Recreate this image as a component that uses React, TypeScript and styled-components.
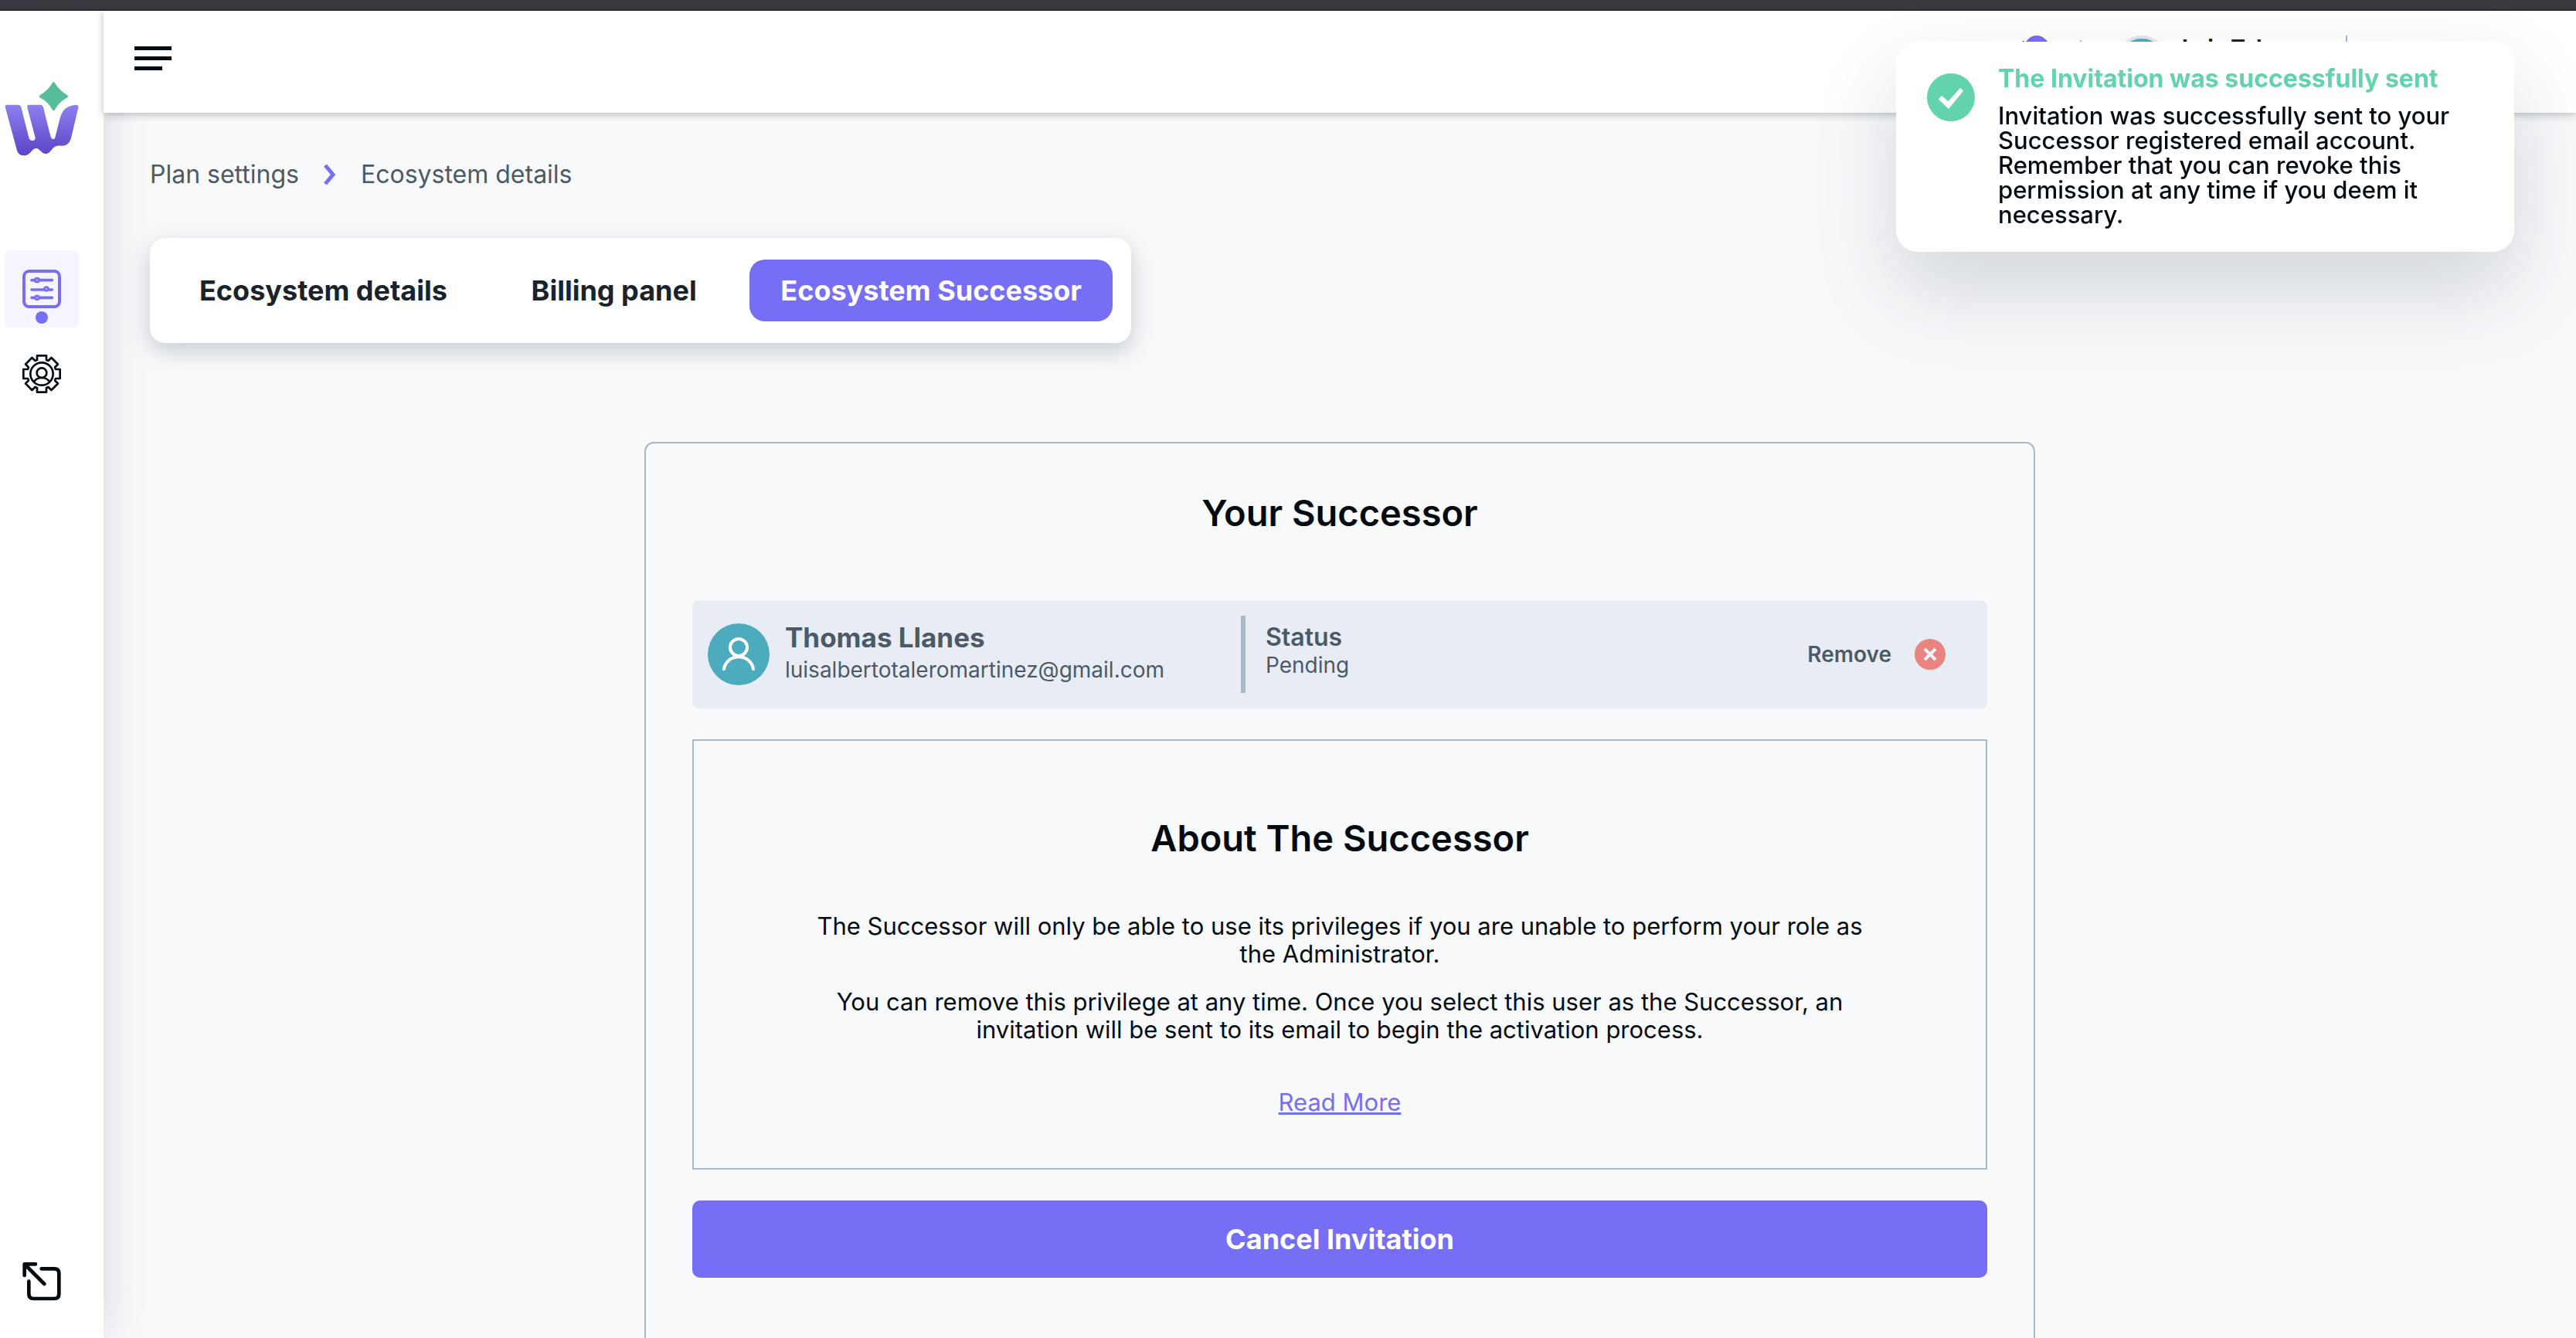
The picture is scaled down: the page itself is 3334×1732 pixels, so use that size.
import React from "react";
import styled, { createGlobalStyle } from "styled-components";

const color = {
  primary: "#766ef4",
  ink: "#030b11",
  dark: "#18232b",
  slate: "#4c5a67",
  line: "#a9b9c8",
  page: "#f8f9fb",
  teal: "#4cacbe",
  mint: "#62d3ac",
  coral: "#e98480",
};

const GlobalStyle = createGlobalStyle`
  *, *::before, *::after { box-sizing: border-box; }
  body { margin: 0; background: ${color.page}; color: ${color.ink}; }
  body, button { font-family: Inter, "Liberation Sans", sans-serif; }
  h1, h2, p { margin: 0; }
  button { border: 0; padding: 0; background: none; color: inherit; cursor: pointer; }
  svg { display: block; }
`;

const Shell = styled.div`
  display: flex;
  flex-direction: column;
  height: 100vh;
  overflow: hidden;
`;

const WindowEdge = styled.div`
  flex: none;
  height: 14px;
  background: #3b3a40;
  border-bottom: 2px solid #2d2c31;
`;

const Body = styled.div`
  flex: 1;
  display: flex;
  min-height: 0;
`;

const Sidebar = styled.aside`
  flex: none;
  width: 134px;
  display: flex;
  flex-direction: column;
  padding: 92px 32px 48px 6px;
  background: #fff;
  box-shadow: 0 0 60px rgba(24, 40, 56, 0.16);
`;

const LogoLink = styled.a`
  width: 96px;
  height: 96px;
`;

const SideNav = styled.nav`
  display: flex;
  flex-direction: column;
  gap: 10px;
  margin-top: 122px;
`;

const SideLink = styled.a<{ $active?: boolean }>`
  display: flex;
  flex-direction: column;
  align-items: center;
  gap: 4px;
  height: 100px;
  padding-top: 25px;
  border-radius: 8px;
  background: ${(p) => (p.$active ? "#f6f5ff" : "transparent")};
`;

const ActiveDot = styled.span`
  width: 16px;
  height: 16px;
  border-radius: 50%;
  background: ${color.primary};
`;

const ExitButton = styled.button`
  align-self: center;
  margin-top: auto;
`;

const Column = styled.div`
  flex: 1;
  min-width: 0;
  display: flex;
  flex-direction: column;
`;

const Header = styled.header`
  position: relative;
  flex: none;
  display: flex;
  align-items: center;
  justify-content: space-between;
  height: 132px;
  padding: 0 296px 0 40px;
  background: #fff;
  box-shadow: 0 2px 10px rgba(20, 32, 44, 0.3);
`;

const MenuButton = styled.button`
  display: flex;
  flex-direction: column;
  gap: 8px;
  margin-bottom: 10px;
`;

const MenuBar = styled.span<{ $short?: boolean }>`
  width: ${(p) => (p.$short ? 36 : 48)}px;
  height: 5px;
  background: ${color.ink};
`;

const HeaderTools = styled.div`
  display: flex;
  align-items: center;
`;

const Bell = styled.button`
  position: relative;
  width: 40px;
  height: 56px;
  margin-right: 40px;
`;

const Badge = styled.span`
  position: absolute;
  top: -6px;
  right: 0;
  width: 32px;
  height: 32px;
  border-radius: 50%;
  background: ${color.primary};
`;

const Rule = styled.span<{ $height: number }>`
  width: 2px;
  height: ${(p) => p.$height}px;
  background: ${color.line};
`;

const HeaderAvatar = styled.span`
  width: 68px;
  height: 68px;
  margin: 0 18px 0 44px;
  border: 4px solid #e3e8ee;
  border-radius: 50%;
  background: ${color.teal};
`;

const AccountName = styled.span`
  width: 212px;
  height: 68px;
  font-size: 28px;
  font-weight: 700;
  line-height: 32px;
  color: ${color.dark};
`;

const Main = styled.main`
  flex: 1;
  min-height: 0;
  display: flex;
  flex-direction: column;
  align-items: flex-start;
  padding: 60px 60px 0;
`;

const Breadcrumb = styled.nav`
  display: flex;
  align-items: center;
  gap: 32px;
  height: 40px;
  font-size: 32px;
  line-height: 40px;
`;

const Crumb = styled.a`
  color: ${color.slate};
  text-decoration: none;
`;

const Tabs = styled.div`
  display: flex;
  justify-content: space-between;
  width: 1270px;
  margin-top: 62px;
  padding: 28px 24px;
  border-radius: 20px;
  background: #fff;
  box-shadow: 0 10px 30px rgba(20, 40, 56, 0.22);
`;

const Tab = styled.button<{ $active?: boolean }>`
  height: 80px;
  padding: 0 40px;
  border-radius: 20px;
  font-size: 36px;
  font-weight: 700;
  line-height: 44px;
  color: ${(p) => (p.$active ? "#fff" : color.dark)};
  background: ${(p) => (p.$active ? color.primary : "transparent")};
`;

const Card = styled.section`
  flex: none;
  align-self: center;
  display: flex;
  flex-direction: column;
  gap: 40px;
  width: 100%;
  max-width: 1800px;
  margin-top: 128px;
  padding: 60px 60px 100px;
  border: 2px solid ${color.line};
  border-radius: 12px;
`;

const Heading = styled.h2`
  font-size: 47px;
  font-weight: 600;
  line-height: 60px;
  text-align: center;
`;

const Person = styled.div`
  display: flex;
  align-items: center;
  height: 140px;
  margin-top: 43px;
  padding: 0 54px 0 20px;
  border-radius: 8px;
  background: #e8edf5;
  color: ${color.slate};
`;

const Identity = styled.div`
  flex: 0 0 690px;
  display: flex;
  align-items: center;
  gap: 20px;
`;

const Stack = styled.div`
  display: flex;
  flex-direction: column;
`;

const NameStack = styled(Stack)`
  gap: 4px;
  padding-bottom: 4px;
`;

const Name = styled.span`
  font-size: 35px;
  font-weight: 700;
  line-height: 40px;
`;

const Small = styled.span`
  font-size: 28px;
  line-height: 36px;
`;

const StatusBlock = styled.div`
  flex: 1;
  height: 100px;
  padding: 10px 0 0 26px;
  border-left: 6px solid ${color.line};
`;

const StatusLabel = styled.span`
  font-size: 32px;
  font-weight: 600;
  line-height: 36px;
`;

const RemoveButton = styled.button`
  display: flex;
  align-items: center;
  gap: 30px;
  font-size: 28px;
  font-weight: 600;
  line-height: 36px;
`;

const About = styled.div`
  display: flex;
  flex-direction: column;
  align-items: center;
  padding: 96px 140px 63px;
  border: 2px solid ${color.line};
`;

const Copy = styled.div`
  display: flex;
  flex-direction: column;
  gap: 26px;
  margin: 66px 0 54px;
  font-size: 31px;
  line-height: 36px;
  text-align: center;
`;

const ReadMore = styled.a`
  font-size: 31px;
  line-height: 44px;
  color: ${color.primary};
`;

const CancelButton = styled.button`
  height: 100px;
  border-radius: 10px;
  background: ${color.primary};
  color: #fff;
  font-size: 36px;
  font-weight: 700;
  line-height: 44px;
`;

const Toast = styled.div`
  position: fixed;
  top: 54px;
  right: 80px;
  display: flex;
  gap: 30px;
  width: 800px;
  min-height: 272px;
  padding: 28px 40px;
  border-radius: 28px;
  background: #fff;
  box-shadow: 0 50px 110px rgba(20, 36, 48, 0.16);
`;

const ToastIcon = styled.span`
  flex: none;
  margin-top: 13px;
`;

const ToastTitle = styled.p`
  font-size: 32px;
  font-weight: 700;
  line-height: 40px;
  color: ${color.mint};
`;

const ToastText = styled.p`
  margin-top: 12px;
  font-size: 31px;
  font-weight: 500;
  line-height: 32px;
`;

const Logo = () => (
  <svg width="96" height="96" viewBox="18 318 288 288" aria-hidden="true">
    <defs>
      <linearGradient id="w" x1="0" y1="0" x2="0" y2="1">
        <stop offset="0" stopColor="#8c80f0" />
        <stop offset="1" stopColor="#5d43c6" />
      </linearGradient>
    </defs>
    <path
      fill="#55bd9a"
      d="M203 322Q208 315 213 322Q227 348 261 370Q267 375 261 379Q227 398 213 426Q208 434 203 426Q190 398 155 379Q149 375 155 370Q190 348 203 322Z"
    />
    <path
      fill="url(#w)"
      d="M20 415Q19 407 28 407H70Q79 407 82 416L112 534Q115 546 125 546Q138 546 137 535L106 417Q104 407 113 407H157Q165 407 168 416L196 528Q199 540 207 540Q213 540 215 530L232 462Q244 409 296 407Q306 407 304 418L276 536Q268 566 240 566Q222 565 212 570Q206 574 200 582Q190 597 178 597Q166 597 154 583Q146 576 140 576Q132 576 124 585Q110 604 94 604Q72 604 66 584Z"
    />
  </svg>
);

const SlidersIcon = () => (
  <svg width="50" height="50" viewBox="87 147 150 150" fill="none" stroke={color.primary} aria-hidden="true">
    <rect x="93" y="153" width="138" height="138" rx="20" strokeWidth="12" />
    <path d="M123 188H202M123 225H202M123 256H202" strokeWidth="11" strokeLinecap="round" />
    <g strokeWidth="7" fill="#a8a2f8">
      <circle cx="144" cy="188" r="8" />
      <circle cx="180" cy="222" r="8" />
      <circle cx="144" cy="256" r="8" />
    </g>
  </svg>
);

const gearPoints = Array.from({ length: 8 }, (_, i) => {
  const a = (i * Math.PI) / 4;
  return [
    [-18, -54],
    [-18, -71],
    [18, -71],
    [18, -54],
  ]
    .map(([x, y]) => [
      (x * Math.cos(a) - y * Math.sin(a)).toFixed(1),
      (x * Math.sin(a) + y * Math.cos(a)).toFixed(1),
    ])
    .join(" ");
}).join(" ");

const GearUserIcon = () => (
  <svg width="50" height="50" viewBox="-75 -75 150 150" fill="none" stroke={color.ink} strokeWidth="8" strokeLinejoin="round" aria-hidden="true">
    <polygon points={gearPoints} />
    <circle r="44" />
    <circle cy="-4" r="19" />
    <path d="M-30 30Q-20 15 0 15Q20 15 30 30" />
  </svg>
);

const ExitIcon = () => (
  <svg width="50" height="50" viewBox="87 99 150 150" fill="none" stroke={color.ink} strokeWidth="14" strokeLinecap="round" strokeLinejoin="round" aria-hidden="true">
    <path d="M95 150V106H138M97 108L172 183M161 124H211Q229 124 229 142V222Q229 240 211 240H130Q112 240 112 222V173" />
  </svg>
);

const ChevronIcon = () => (
  <svg width="16" height="28" viewBox="0 0 16 28" fill="none" stroke={color.primary} strokeWidth="5" aria-hidden="true">
    <path d="M2 2L12 14L2 26" />
  </svg>
);

const BellIcon = () => (
  <svg width="36" height="56" viewBox="0 0 36 56" fill="none" stroke={color.dark} strokeWidth="3" aria-hidden="true">
    <path d="M4 40H32L28 32V20Q28 8 16 8Q6 8 6 20V32ZM12 44Q18 50 24 44M8 2L4 5" />
  </svg>
);

const PersonIcon = () => (
  <svg width="80" height="80" viewBox="0 0 80 80" fill="none" aria-hidden="true">
    <circle cx="40" cy="40" r="40" fill={color.teal} />
    <g stroke="#fff" strokeWidth="4" strokeLinecap="round">
      <circle cx="40" cy="31" r="11" />
      <path d="M21 59C25 38 55 38 59 59" />
    </g>
  </svg>
);

const CloseIcon = () => (
  <svg width="40" height="40" viewBox="0 0 40 40" aria-hidden="true">
    <circle cx="20" cy="20" r="20" fill={color.coral} />
    <path d="M13 13L27 27M27 13L13 27" stroke="#f3f5f9" strokeWidth="4" />
  </svg>
);

const CheckIcon = () => (
  <svg width="62" height="62" viewBox="135 165 186 186" aria-hidden="true">
    <circle cx="228" cy="258" r="93" fill={color.mint} />
    <path d="M179 265L193 251L217 274L264 221L276 233L219 303Z" fill="#fff" />
  </svg>
);

export default function App() {
  return (
    <Shell>
      <GlobalStyle />
      <WindowEdge />
      <Body>
        <Sidebar>
          <LogoLink href="#" aria-label="Home">
            <Logo />
          </LogoLink>
          <SideNav aria-label="Sections">
            <SideLink href="#" $active aria-label="Plan settings">
              <SlidersIcon />
              <ActiveDot />
            </SideLink>
            <SideLink href="#" aria-label="Account settings">
              <GearUserIcon />
            </SideLink>
          </SideNav>
          <ExitButton aria-label="Exit">
            <ExitIcon />
          </ExitButton>
        </Sidebar>
        <Column>
          <Header>
            <MenuButton aria-label="Menu">
              <MenuBar />
              <MenuBar />
              <MenuBar $short />
            </MenuButton>
            <HeaderTools>
              <Bell aria-label="Notifications">
                <BellIcon />
                <Badge />
              </Bell>
              <Rule $height={56} />
              <HeaderAvatar />
              <AccountName>Luis Talero</AccountName>
              <Rule $height={68} />
            </HeaderTools>
          </Header>
          <Main>
            <Breadcrumb aria-label="Breadcrumb">
              <Crumb href="#">Plan settings</Crumb>
              <ChevronIcon />
              <Crumb href="#">Ecosystem details</Crumb>
            </Breadcrumb>
            <Tabs>
              <Tab>Ecosystem details</Tab>
              <Tab>Billing panel</Tab>
              <Tab $active>Ecosystem Successor</Tab>
            </Tabs>
            <Card>
              <Heading>Your Successor</Heading>
              <Person>
                <Identity>
                  <PersonIcon />
                  <NameStack>
                    <Name>Thomas Llanes</Name>
                    <Small>luisalbertotaleromartinez@gmail.com</Small>
                  </NameStack>
                </Identity>
                <StatusBlock>
                  <Stack>
                    <StatusLabel>Status</StatusLabel>
                    <Small>Pending</Small>
                  </Stack>
                </StatusBlock>
                <RemoveButton>
                  Remove
                  <CloseIcon />
                </RemoveButton>
              </Person>
              <About>
                <Heading>About The Successor</Heading>
                <Copy>
                  <p>
                    The Successor will only be able to use its privileges if you are unable to perform your role as the
                    Administrator.
                  </p>
                  <p>
                    You can remove this privilege at any time. Once you select this user as the Successor, an invitation
                    will be sent to its email to begin the activation process.
                  </p>
                </Copy>
                <ReadMore href="#">Read More</ReadMore>
              </About>
              <CancelButton>Cancel Invitation</CancelButton>
            </Card>
          </Main>
        </Column>
      </Body>
      <Toast role="status">
        <ToastIcon>
          <CheckIcon />
        </ToastIcon>
        <div>
          <ToastTitle>The Invitation was successfully sent</ToastTitle>
          <ToastText>
            Invitation was successfully sent to your Successor registered email account. Remember that you can revoke
            this permission at any time if you deem it necessary.
          </ToastText>
        </div>
      </Toast>
    </Shell>
  );
}
